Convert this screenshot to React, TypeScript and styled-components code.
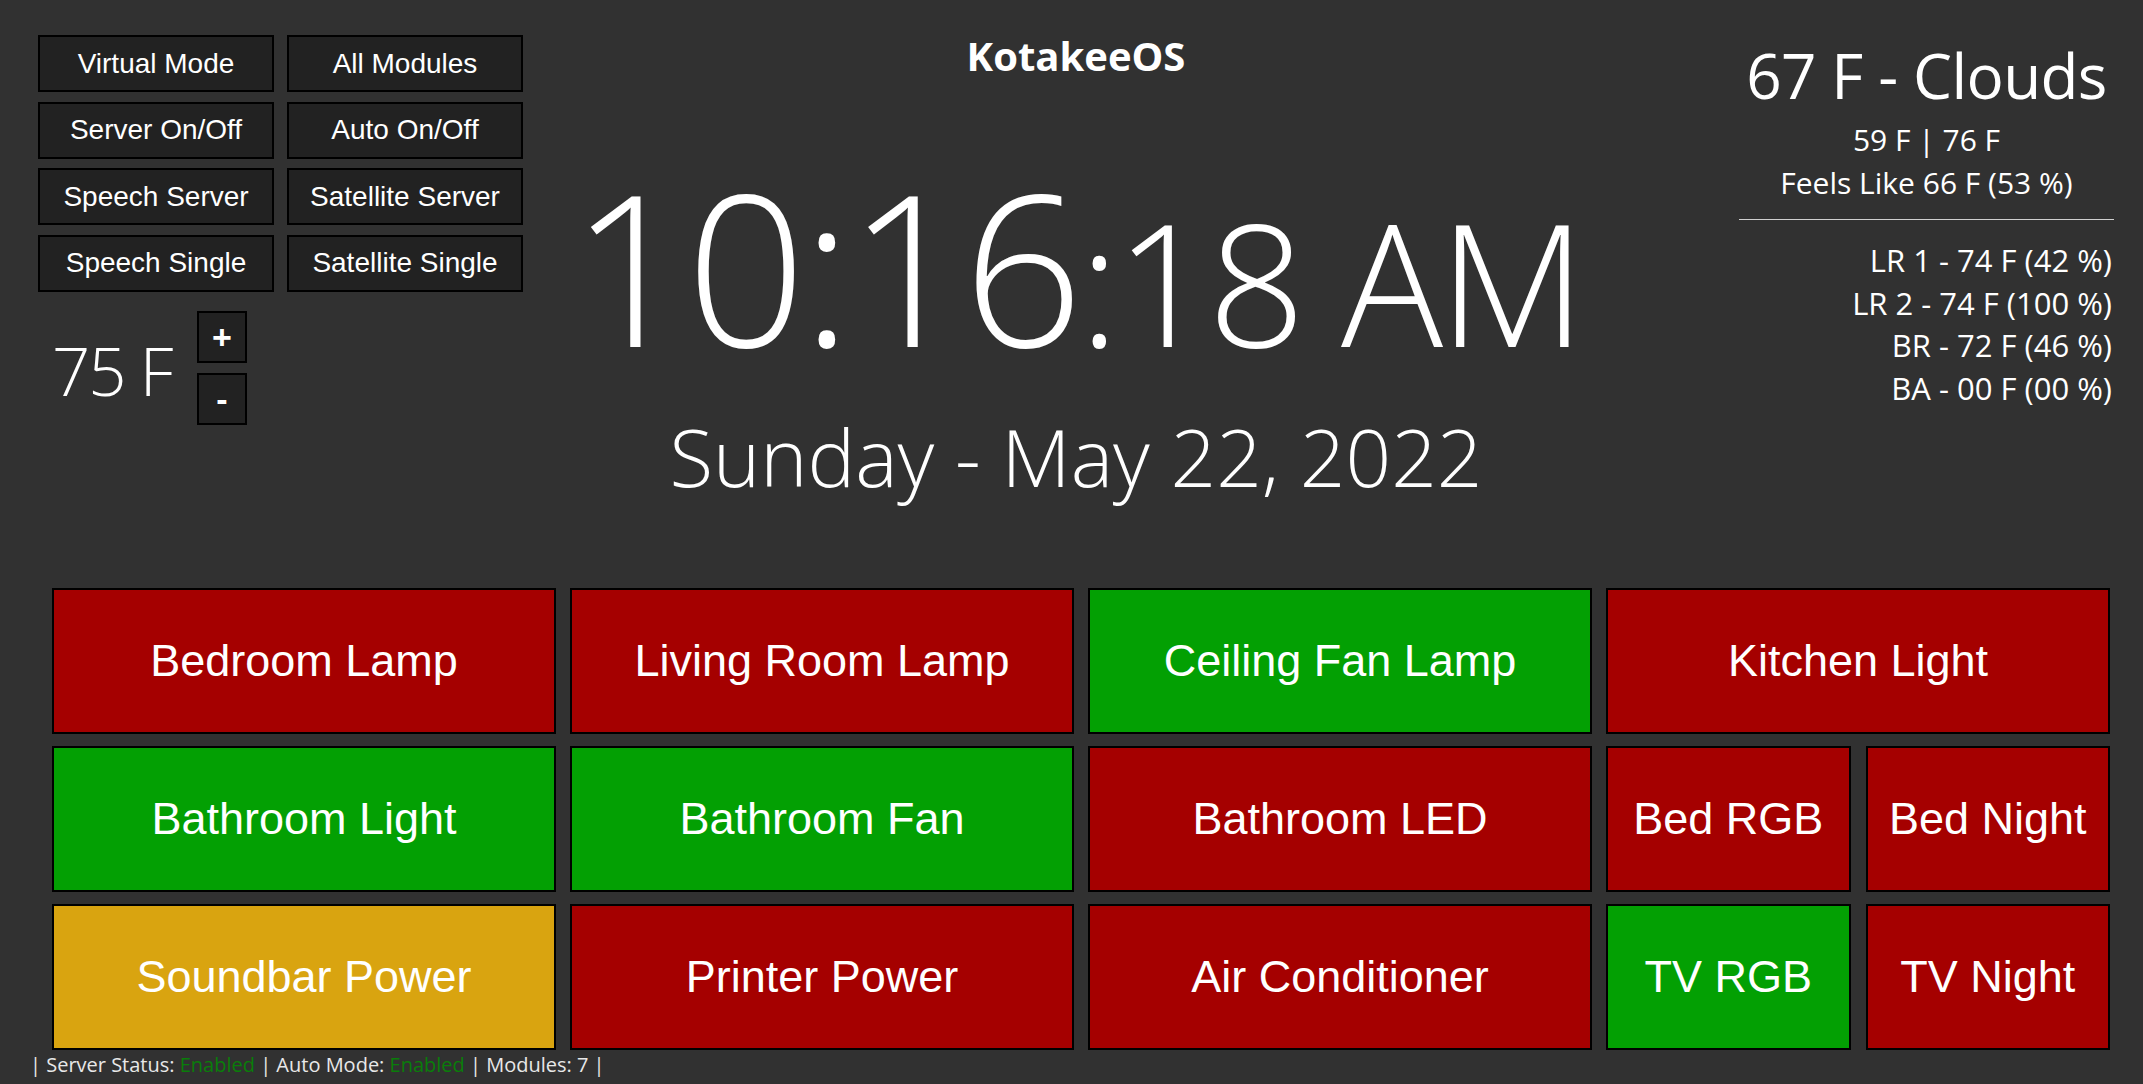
import React from 'react';
import styled, { createGlobalStyle } from 'styled-components';

const GlobalStyle = createGlobalStyle`
  html, body {
    margin: 0;
    padding: 0;
    background: #313131;
  }
  body {
    font-family: 'Open Sans', 'Noto Sans', sans-serif;
    color: #fff;
    overflow: hidden;
  }
  * {
    box-sizing: border-box;
  }
`;

const Page = styled.div`
  width: 2143px;
  height: 1084px;
  display: flex;
  flex-direction: column;
`;

const Header = styled.header`
  display: grid;
  grid-template-columns: 1fr auto 1fr;
  height: 588px;
  padding: 35px 29px 0 38px;
`;

/* left: control buttons + thermostat */
const ControlPanel = styled.div`
  display: flex;
  flex-direction: column;
  justify-self: start;
`;

const ControlGrid = styled.div`
  display: grid;
  grid-template-columns: repeat(2, 236px);
  grid-auto-rows: 57px;
  column-gap: 13px;
  row-gap: 9.6px;
`;

const ControlButton = styled.button`
  background: #222;
  border: 2px solid #000;
  color: #fff;
  font-family: 'Liberation Sans', Arial, sans-serif;
  font-size: 28px;
  padding: 0;
  cursor: pointer;
`;

const Thermostat = styled.div`
  display: flex;
  align-items: center;
  margin-top: 19px;
  padding-left: 14px;
`;

const ThermoValue = styled.div`
  width: 145px;
  font-size: 67px;
  font-weight: 300;
  letter-spacing: -0.03em;
  line-height: 1;
  margin-top: 6px;
`;

const Stepper = styled.div`
  display: flex;
  flex-direction: column;
  gap: 10px;
`;

const StepButton = styled.button`
  width: 50px;
  height: 52px;
  background: #222;
  border: 2px solid #000;
  color: #fff;
  font-family: 'Liberation Sans', Arial, sans-serif;
  font-size: 34px;
  font-weight: 700;
  line-height: 1;
  padding: 0;
`;

/* center: title, clock, date */
const Center = styled.div`
  display: flex;
  flex-direction: column;
  align-items: center;
`;

const Title = styled.h1`
  margin: 1px 0 0;
  font-size: 40px;
  font-weight: 700;
  line-height: 1;
`;

const Clock = styled.div`
  margin-top: 85px;
  font-size: 210px;
  font-weight: 300;
  line-height: 1;
  white-space: nowrap;
  letter-spacing: -0.02em;
`;

const Seconds = styled.span`
  font-size: 170px;
`;

const DateLine = styled.div`
  margin-top: 45px;
  font-size: 80px;
  font-weight: 300;
  line-height: 1;
  white-space: nowrap;
`;

/* right: weather */
const Weather = styled.div`
  justify-self: end;
  width: 375px;
  margin-top: 9px;
  display: flex;
  flex-direction: column;
`;

const Current = styled.div`
  text-align: center;
  font-size: 62px;
  font-weight: 400;
  letter-spacing: -0.01em;
  line-height: 1;
  white-space: nowrap;
`;

const Forecast = styled.div`
  margin-top: 12px;
  text-align: center;
  font-size: 30px;
  line-height: 43px;
`;

const Divider = styled.hr`
  margin: 15px 0 0;
  border: none;
  border-top: 1px solid #d0d0d0;
`;

const Sensors = styled.div`
  margin-top: 19px;
  text-align: right;
  font-size: 31px;
  line-height: 42.7px;
  padding-right: 2px;
`;

/* device tiles */
const DeviceGrid = styled.main`
  display: grid;
  grid-template-columns: repeat(4, 504px);
  grid-auto-rows: 146px;
  column-gap: 14px;
  row-gap: 12px;
  padding-left: 52px;
`;

const Split = styled.div`
  display: grid;
  grid-template-columns: 1fr 1fr;
  gap: 15px;
`;

const tileColors = {
  off: '#a50000',
  on: '#03a003',
  pending: '#d9a410',
};

type TileState = keyof typeof tileColors;

const Tile = styled.button<{ $state: TileState }>`
  background: ${(p) => tileColors[p.$state]};
  border: 2px solid #000;
  color: #fff;
  font-family: 'Liberation Sans', Arial, sans-serif;
  font-size: 45px;
  padding: 0;
  white-space: nowrap;
  cursor: pointer;
`;

const StatusBar = styled.footer`
  margin-top: 5px;
  padding-left: 30px;
  font-size: 20px;
  line-height: 1;
  color: #e8e8e8;
  white-space: nowrap;
`;

const Enabled = styled.span`
  color: #0a7d0a;
`;

const controls = [
  'Virtual Mode',
  'All Modules',
  'Server On/Off',
  'Auto On/Off',
  'Speech Server',
  'Satellite Server',
  'Speech Single',
  'Satellite Single',
];

const sensors = [
  'LR 1 - 74 F (42 %)',
  'LR 2 - 74 F (100 %)',
  'BR - 72 F (46 %)',
  'BA - 00 F (00 %)',
];

type Device = { name: string; state: TileState };
type Cell = Device | [Device, Device];

const devices: Cell[] = [
  { name: 'Bedroom Lamp', state: 'off' },
  { name: 'Living Room Lamp', state: 'off' },
  { name: 'Ceiling Fan Lamp', state: 'on' },
  { name: 'Kitchen Light', state: 'off' },
  { name: 'Bathroom Light', state: 'on' },
  { name: 'Bathroom Fan', state: 'on' },
  { name: 'Bathroom LED', state: 'off' },
  [
    { name: 'Bed RGB', state: 'off' },
    { name: 'Bed Night', state: 'off' },
  ],
  { name: 'Soundbar Power', state: 'pending' },
  { name: 'Printer Power', state: 'off' },
  { name: 'Air Conditioner', state: 'off' },
  [
    { name: 'TV RGB', state: 'on' },
    { name: 'TV Night', state: 'off' },
  ],
];

const App: React.FC = () => {
  return (
    <>
      <GlobalStyle />
      <Page>
        <Header>
          <ControlPanel>
            <ControlGrid>
              {controls.map((label) => (
                <ControlButton key={label}>{label}</ControlButton>
              ))}
            </ControlGrid>
            <Thermostat>
              <ThermoValue>75 F</ThermoValue>
              <Stepper>
                <StepButton>+</StepButton>
                <StepButton>-</StepButton>
              </Stepper>
            </Thermostat>
          </ControlPanel>

          <Center>
            <Title>KotakeeOS</Title>
            <Clock>
              10:16<Seconds>:18 AM</Seconds>
            </Clock>
            <DateLine>Sunday - May 22, 2022</DateLine>
          </Center>

          <Weather>
            <Current>67 F - Clouds</Current>
            <Forecast>
              59 F | 76 F
              <br />
              Feels Like 66 F (53 %)
            </Forecast>
            <Divider />
            <Sensors>
              {sensors.map((s) => (
                <div key={s}>{s}</div>
              ))}
            </Sensors>
          </Weather>
        </Header>

        <DeviceGrid>
          {devices.map((cell, i) =>
            Array.isArray(cell) ? (
              <Split key={i}>
                {cell.map((d) => (
                  <Tile key={d.name} $state={d.state}>
                    {d.name}
                  </Tile>
                ))}
              </Split>
            ) : (
              <Tile key={i} $state={cell.state}>
                {cell.name}
              </Tile>
            )
          )}
        </DeviceGrid>

        <StatusBar>
          | Server Status: <Enabled>Enabled</Enabled> | Auto Mode: <Enabled>Enabled</Enabled> | Modules: 7 |
        </StatusBar>
      </Page>
    </>
  );
};

export default App;
